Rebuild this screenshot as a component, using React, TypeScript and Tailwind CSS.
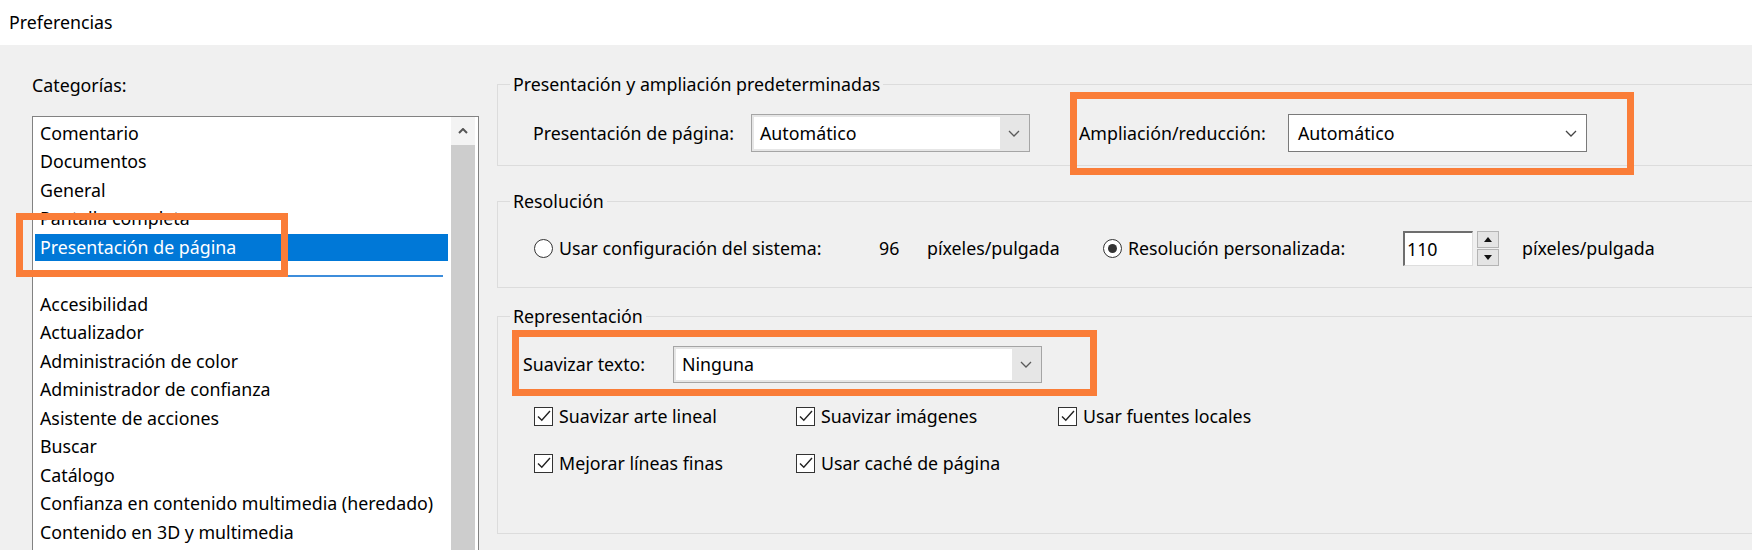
import type { ReactNode } from "react";

const TOP_ITEMS = ["Comentario", "Documentos", "General", "Pantalla completa"];
const BOTTOM_ITEMS = [
  "Accesibilidad",
  "Actualizador",
  "Administración de color",
  "Administrador de confianza",
  "Asistente de acciones",
  "Buscar",
  "Catálogo",
  "Confianza en contenido multimedia (heredado)",
  "Contenido en 3D y multimedia",
];

function Chevron({ className }: { className: string }) {
  return (
    <svg viewBox="0 0 12 7" className={className} fill="none" stroke="currentColor" strokeWidth="1.3">
      <path d="M1 1l5 5 5-5" />
    </svg>
  );
}

function Combo({ value, className, flat = false }: { value: string; className: string; flat?: boolean }) {
  if (flat) {
    return (
      <div className={`${className} flex items-center bg-white border border-[#7a7a7a] pl-[9px] pr-[9px]`}>
        <span className="flex-1">{value}</span>
        <Chevron className="w-[12px] h-[7px] text-[#444]" />
      </div>
    );
  }
  return (
    <div className={`${className} flex bg-[#e6e6e6] border border-[#a5a5a5] p-[2px]`}>
      <div className="flex-1 bg-white flex items-center pl-[6px]">{value}</div>
      <div className="w-[27px] flex items-center justify-center">
        <Chevron className="w-[12px] h-[7px] text-[#5a5a5a]" />
      </div>
    </div>
  );
}

function Radio({ on = false }: { on?: boolean }) {
  return (
    <div className="w-[19px] h-[19px] mr-[6px] rounded-full border-[1.5px] border-[#333] bg-white flex items-center justify-center shrink-0">
      {on && <div className="w-[9px] h-[9px] rounded-full bg-[#333]" />}
    </div>
  );
}

function Check({ label }: { label: string }) {
  return (
    <div className="flex items-center h-[24px]">
      <div className="w-[19px] h-[19px] mr-[6px] border border-[#333] bg-white flex items-center justify-center">
        <svg viewBox="0 0 16 16" className="w-[16px] h-[16px]" fill="none" stroke="#222" strokeWidth="1.4">
          <path d="M2 8.5l3.8 3.8L14 3" />
        </svg>
      </div>
      <span>{label}</span>
    </div>
  );
}

function Group({ title, className, children }: { title: string; className: string; children: ReactNode }) {
  return (
    <fieldset className={`${className} border border-r-0 border-[#dcdcdc]`}>
      <legend className="ml-[12px] px-[3px] leading-[24px]">{title}</legend>
      {children}
    </fieldset>
  );
}

function ListRow({ label, selected = false }: { label: string; selected?: boolean }) {
  return (
    <div className="h-[28.5px] flex items-center ml-[2px] mr-[3px]">
      <div className={`w-full h-[27px] flex items-center pl-[5px] ${selected ? "bg-[#0078d7] text-white" : ""}`}>
        {label}
      </div>
    </div>
  );
}

function CategoryPane() {
  return (
    <div className="w-[497px] shrink-0 pl-[32px] pr-[18px] pt-[28px]">
      <div className="leading-[24px]">Categorías:</div>
      <div className="mt-[19px] w-[447px] h-[460px] bg-white border border-[#828282] flex">
        <div className="flex-1 pt-[2px]">
          {TOP_ITEMS.map((t) => (
            <ListRow key={t} label={t} />
          ))}
          <ListRow label="Presentación de página" selected />
          <div className="h-[28.5px] flex items-center ml-[2px] mr-[8px]">
            <div className="w-full h-[2px] bg-[#3d8ddb]" />
          </div>
          {BOTTOM_ITEMS.map((t) => (
            <ListRow key={t} label={t} />
          ))}
        </div>
        {/* scrollbar */}
        <div className="w-[24px] mr-[3px] flex flex-col">
          <div className="h-[28px] bg-[#f3f3f3] flex items-center justify-center">
            <svg viewBox="0 0 10 6" className="w-[10px] h-[6px]" fill="none" stroke="#555" strokeWidth="2">
              <path d="M1 5l4-4 4 4" />
            </svg>
          </div>
          <div className="flex-1 bg-[#cdcdcd]" />
        </div>
      </div>
    </div>
  );
}

export default function App() {
  return (
    <div className="relative w-[1752px] h-[550px] overflow-hidden bg-[#f0f0f0] text-[17.8px] text-black whitespace-nowrap font-['Noto_Sans','Segoe_UI',sans-serif]">
      <div className="h-[45px] bg-white flex items-center pl-[9px]">Preferencias</div>

      <div className="flex">
        <CategoryPane />

        <div className="flex-1 pt-[27px] flex flex-col">
          <Group title="Presentación y ampliación predeterminadas" className="">
            <div className="pt-[18px] pb-[13px] pl-[35px]">
              <div className="flex items-start h-[38px]">
                <div className="w-[218px] h-[38px] flex items-center">Presentación de página:</div>
                <Combo value="Automático" className="w-[279px] h-[38px]" />
                <div className="ml-[40px] -mt-[22px] -mb-[23px] border-[7px] border-[#fa7d38] pt-[15px] pb-[16px] pl-[2px] pr-[40px] flex items-center">
                  <div className="w-[209px] h-[38px] flex items-center">Ampliación/reducción:</div>
                  <Combo value="Automático" className="w-[299px] h-[38px]" flat />
                </div>
              </div>
            </div>
          </Group>

          <Group title="Resolución" className="mt-[23px]">
            <div className="pt-[18px] pb-[21px] pl-[36px]">
              <div className="flex items-center h-[35px]">
                <Radio />
                <div className="w-[320px]">Usar configuración del sistema:</div>
                <div className="w-[48px]">96</div>
                <div className="w-[176px]">píxeles/pulgada</div>
                <Radio on />
                <div className="w-[275px]">Resolución personalizada:</div>
                <div className="w-[70px] h-[35px] bg-white border-t-2 border-l-2 border-t-[#6e6e6e] border-l-[#6e6e6e] border-r border-b border-r-[#dedede] border-b-[#dedede] flex items-center pl-[2px]">
                  110
                </div>
                <div className="ml-[4px] w-[22px] h-[35px] flex flex-col gap-[1px]">
                  <div className="flex-1 bg-[#e4e4e4] border border-[#b4b4b4] flex items-center justify-center">
                    <svg viewBox="0 0 8 5" className="w-[8px] h-[5px]">
                      <path d="M0 5L4 0l4 5z" fill="#111" />
                    </svg>
                  </div>
                  <div className="flex-1 bg-[#e4e4e4] border border-[#b4b4b4] flex items-center justify-center">
                    <svg viewBox="0 0 8 5" className="w-[8px] h-[5px]">
                      <path d="M0 0l4 5 4-5z" fill="#111" />
                    </svg>
                  </div>
                </div>
                <div className="ml-[23px]">píxeles/pulgada</div>
              </div>
            </div>
          </Group>

          <Group title="Representación" className="mt-[16px]">
            <div className="pt-[2px] pb-[58px] pl-[14px]">
              <div className="w-fit border-[7px] border-[#fa7d38] pt-[9px] pb-[6px] pl-[4px] pr-[48px] flex items-center">
                <div className="w-[150px]">Suavizar texto:</div>
                <Combo value="Ninguna" className="w-[369px] h-[37px]" />
              </div>
              <div className="mt-[8px] pl-[22px] grid grid-cols-[262px_262px_262px] gap-y-[23px]">
                <Check label="Suavizar arte lineal" />
                <Check label="Suavizar imágenes" />
                <Check label="Usar fuentes locales" />
                <Check label="Mejorar líneas finas" />
                <Check label="Usar caché de página" />
              </div>
            </div>
          </Group>
        </div>
      </div>

      {/* highlight over the category list */}
      <div className="absolute left-[16px] top-[213px] w-[272px] h-[64px] border-[7px] border-[#fa7d38]" />
    </div>
  );
}
